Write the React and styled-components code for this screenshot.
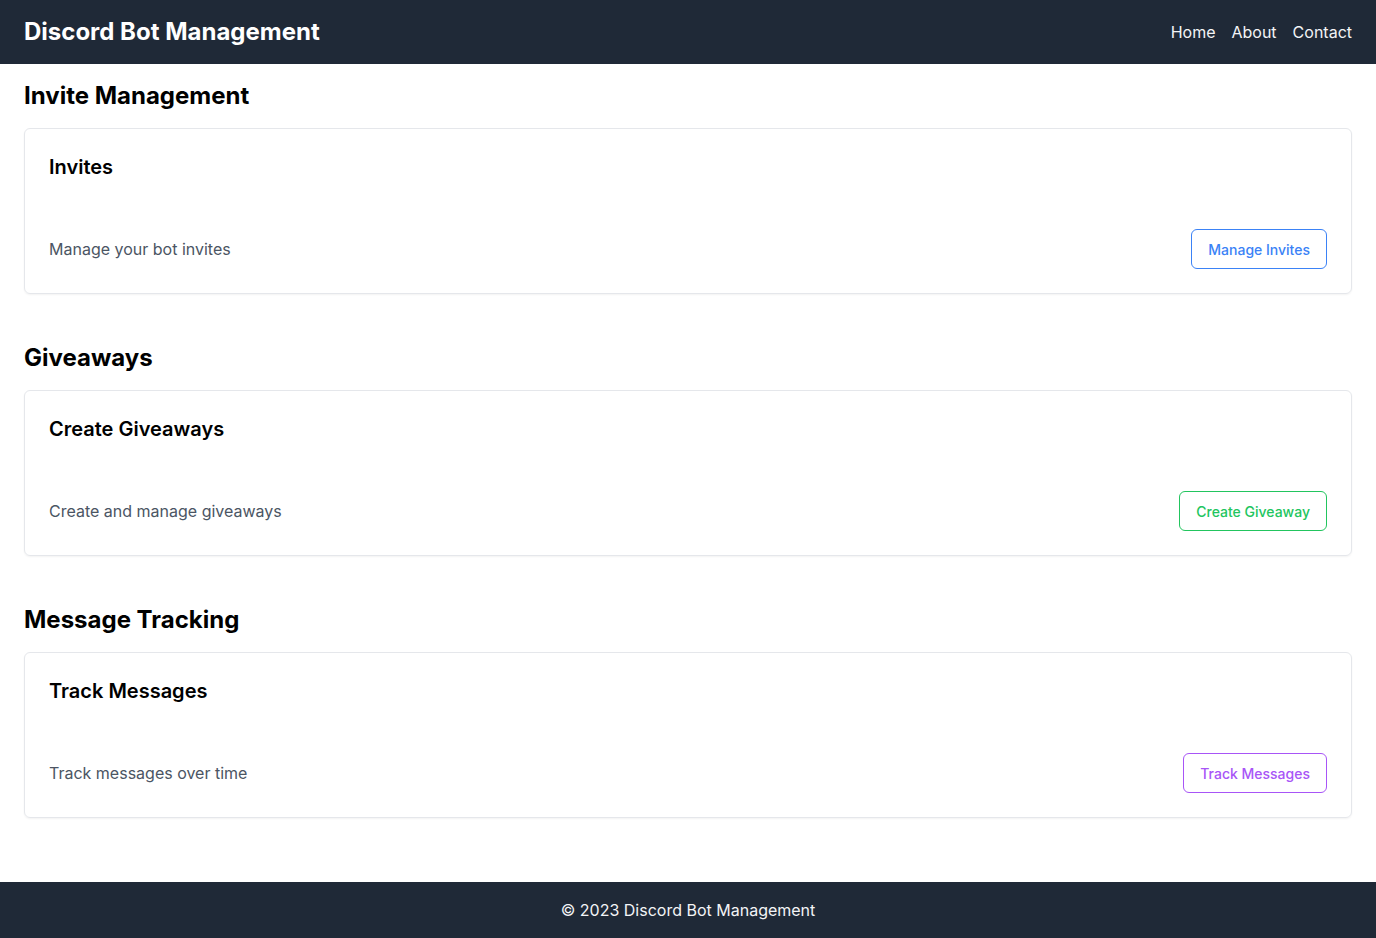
import React from 'react';
import styled, { createGlobalStyle } from 'styled-components';

const GlobalStyle = createGlobalStyle`
  * {
    box-sizing: border-box;
  }
  body {
    margin: 0;
    font-family: Inter, 'Noto Sans', sans-serif;
    background: #ffffff;
    color: #000000;
  }
`;

const StyledPage = styled.div`
  min-height: 938px;
  display: flex;
  flex-direction: column;
`;
const StyledHeader = styled.header`
  height: 64px;
  padding: 0 24px;
  background: #1f2937;
  display: flex;
  align-items: center;
  justify-content: space-between;
  h1 {
    margin: 0;
    font-size: 24px;
    line-height: 32px;
    font-weight: 700;
    color: #ffffff;
  }
`;
const StyledNav = styled.nav`
  display: flex;
  gap: 16px;
  a {
    color: #f3f4f6;
    font-size: 16px;
    line-height: 24px;
    text-decoration: none;
  }
`;
const StyledMain = styled.main`
  flex: 1;
  padding: 16px 24px 64px;
  display: flex;
  flex-direction: column;
  gap: 48px;
`;
const StyledSection = styled.section`
  h2 {
    margin: 0 0 16px;
    font-size: 24px;
    line-height: 32px;
    font-weight: 700;
  }
`;
const StyledCard = styled.div`
  border: 1px solid #e5e7eb;
  border-radius: 6px;
  box-shadow: 0 1px 2px rgba(0, 0, 0, 0.05);
  padding: 24px;
  display: flex;
  flex-direction: column;
  gap: 48px;
  h3 {
    margin: 0;
    font-size: 20px;
    line-height: 28px;
    font-weight: 600;
  }
`;
const StyledRow = styled.div`
  display: flex;
  align-items: center;
  justify-content: space-between;
  p {
    margin: 0;
    font-size: 16px;
    line-height: 24px;
    color: #4b5563;
  }
`;
const StyledButton = styled.button`
  height: 40px;
  padding: 0 16px;
  border: 1px solid ${(props) => props.$color};
  border-radius: 6px;
  background: #ffffff;
  color: ${(props) => props.$color};
  font-family: Inter, 'Noto Sans', sans-serif;
  font-size: 14px;
  font-weight: 500;
  cursor: pointer;
`;
const StyledFooter = styled.footer`
  height: 56px;
  background: #1f2937;
  color: #f3f4f6;
  display: flex;
  align-items: center;
  justify-content: center;
  font-size: 16px;
`;

const sections = [
  {
    heading: 'Invite Management',
    title: 'Invites',
    text: 'Manage your bot invites',
    button: 'Manage Invites',
    color: '#3b82f6'
  },
  {
    heading: 'Giveaways',
    title: 'Create Giveaways',
    text: 'Create and manage giveaways',
    button: 'Create Giveaway',
    color: '#22c55e'
  },
  {
    heading: 'Message Tracking',
    title: 'Track Messages',
    text: 'Track messages over time',
    button: 'Track Messages',
    color: '#a855f7'
  }
];

const App = () => {
  return (
    <>
      <GlobalStyle />
      <StyledPage>
        <StyledHeader>
          <h1>Discord Bot Management</h1>
          <StyledNav>
            <a href='#'>Home</a>
            <a href='#'>About</a>
            <a href='#'>Contact</a>
          </StyledNav>
        </StyledHeader>
        <StyledMain>
          {sections.map((section) => (
            <StyledSection key={section.heading}>
              <h2>{section.heading}</h2>
              <StyledCard>
                <h3>{section.title}</h3>
                <StyledRow>
                  <p>{section.text}</p>
                  <StyledButton $color={section.color}>
                    {section.button}
                  </StyledButton>
                </StyledRow>
              </StyledCard>
            </StyledSection>
          ))}
        </StyledMain>
        <StyledFooter>© 2023 Discord Bot Management</StyledFooter>
      </StyledPage>
    </>
  );
};

export default App;
